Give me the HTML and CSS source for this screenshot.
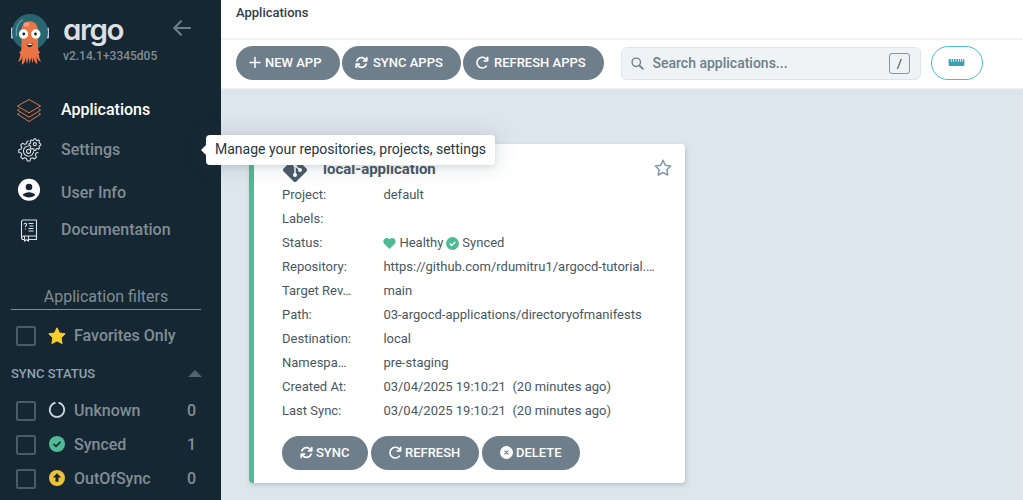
FILE: index.html
```
<!DOCTYPE html>
<html lang="en">
<head>
<meta charset="utf-8">
<title>Applications</title>
<link rel="stylesheet" href="styles.css">
</head>
<body>
<svg width="0" height="0" class="defs">
  <symbol id="sync" viewBox="0 0 512 512"><path fill="currentColor" d="M105 203c22-62 81-107 151-107 44 0 84 18 113 47l17 17h-50c-18 0-32 14-32 32s14 32 32 32h128c18 0 32-14 32-32V64c0-18-14-32-32-32s-32 14-32 32v51l-18-17C374 58 318 32 256 32 158 32 76 94 45 181c-6 17 3 35 20 41s34-2 40-19zM39 289c-9 3-16 9-20 18-2 4-3 9-3 13v128c0 18 14 32 32 32s32-14 32-32v-51l18 17c40 41 96 66 158 66 97 0 180-62 211-149 6-17-3-35-19-41-17-6-35 3-41 20-22 62-81 106-151 106-44 0-84-18-113-47l-17-17h50c18 0 32-14 32-32s-14-32-32-32H48c-3 0-6 0-9 1z"/></symbol>
  <symbol id="redo" viewBox="0 0 512 512"><path fill="none" stroke="currentColor" stroke-width="62" stroke-linecap="round" stroke-linejoin="round" d="M460 55v140H320M445 185A210 210 0 1 0 405 400"/></symbol>
  <symbol id="check" viewBox="0 0 16 16"><circle cx="8" cy="8" r="8" fill="#4fba94"/><path d="M5 8.400l2 2 4-4" fill="none" stroke="currentColor" stroke-width="1.600" stroke-linecap="round" stroke-linejoin="round"/></symbol>
</svg>
<div class="layout">
  <aside class="sidebar">
    <header class="brand">
      <svg class="mascot" viewBox="0 0 40 52">
        <rect x="1" y="14.500" width="3" height="11" rx="1" fill="#b6cde3"/><rect x="36" y="14.500" width="3" height="11" rx="1" fill="#b6cde3"/>
        <circle cx="20" cy="19" r="18" fill="#315f75"/><circle cx="20" cy="19" r="16.500" fill="#2a6670"/>
        <path d="M6.500 23C5.500 15 8 9.500 13 6.500" fill="none" stroke="#6c9daa" stroke-width="1.200"/>
        <path d="M11.500 17.500c0-12.500 16.500-12.500 16.500 0V34c0 4 1.500 5 2.500 5.700l-1.800.6c.3 3.500 1 6.500 2.500 8.400-3-.8-4.200-3-4.800-6l1 8.300c-2.500-.8-3.500-4-3.900-7l-.8 6.800-1.500-6.500-1.500 7-1-7-1.700 7-1.500-7c0 3-1 6.500-3.800 7.300l.9-8.600c-.7 3-2 5-4.700 6 1.500-2.500 2.300-5 2.500-8.400L9 39.700c1-.7 2.500-1.700 2.500-5.700z" fill="#ea7445"/>
        <ellipse cx="16.500" cy="11.500" rx="3" ry="2.200" fill="#f29c7a"/>
        <circle cx="13.500" cy="21" r="4.700" fill="#fff"/><circle cx="25.800" cy="21" r="4.700" fill="#fff"/><circle cx="13.800" cy="21" r="1.400" fill="#17202a"/><circle cx="25.500" cy="21" r="1.400" fill="#17202a"/>
        <path d="M16.800 30.500c2 1 3.800 1 5.800 0 0 4.800-5.800 4.800-5.800 0z" fill="#2b1516"/><path d="M17.500 31h4.300v1h-4.300z" fill="#fff"/>
      </svg>
      <div class="brand-text"><div class="wordmark">argo</div><div class="version">v2.14.1+3345d05</div></div>
      <svg class="back" viewBox="0 0 18 16"><path d="M17 8H1.500M8 1.200L1.300 8 8 14.800" fill="none" stroke="#6c7d89" stroke-width="2.100" stroke-linecap="round" stroke-linejoin="round"/></svg>
    </header>
    <nav class="nav">
      <a class="nav-item active"><svg viewBox="0 0 26 26"><g fill="none" stroke="#dc7645" stroke-width="1" stroke-linejoin="round"><path d="M13 2.500l11.500 6.500L13 15.800 1.500 9z"/><path d="M3.500 12l-2 1.200L13 20.300l11.500-7.100-2-1.200M3.500 16l-2 1.200L13 24.500l11.500-7.300-2-1.200"/></g></svg><span>Applications</span></a>
      <a class="nav-item"><svg viewBox="-1.500 -1 29 29"><g fill="none" stroke="#dce2e6" stroke-width="1.200" stroke-linejoin="round"><path d="M12.500 3.500l-1.500.2-.8 2.700-2 .8-2.300-1.300-2.200 2.200 1.300 2.300-.8 1.900-2.600.8v3.100l2.600.7.8 2.100-1.300 2.300 2.200 2.200 2.300-1.300 2 .8.800 2.700h3.100l.7-2.700 2.100-.8 2.300 1.300 2.200-2.200-1.300-2.300.8-2.100 2.600-.7"/><path d="M12.500 9a5.700 5.700 0 1 0 5.700 6"/><circle cx="12.500" cy="15" r="2.300"/><circle cx="19.500" cy="7" r="1.700"/><path d="M18.700 1h1.700l.6 1.500 1.100.5 1.500-.7 1.200 1.200-.7 1.500.5 1.100 1.500.6v1.500l-1.500.6-.5 1.100.7 1.500-1.200 1.200-1.500-.7-1.100.5-.6 1.500h-1.700l-.6-1.500-1.100-.5-1.500.7-1.200-1.200.7-1.500-.5-1.100-1.500-.6V6.700l1.500-.6.5-1.100-.7-1.500 1.200-1.200 1.500.7 1.100-.5z"/></g></svg><span>Settings</span></a>
      <a class="nav-item user"><svg viewBox="0 0 26 26"><circle cx="13" cy="12.800" r="11" fill="#fff"/><circle cx="13" cy="10" r="3.300" fill="#152733"/><path d="M6.700 18c2.500-3.800 10.100-3.800 12.600 0-3 3.300-9.600 3.300-12.600 0z" fill="#152733"/></svg><span>User Info</span></a>
      <a class="nav-item"><svg viewBox="0 0 26 26"><g fill="none" stroke="#dce2e6" stroke-width="1.100"><path d="M8.500 22.500H7.500Q5.500 22.500 5.500 20.500V5Q5.500 3 7.500 3H20.500V19H8Q5.500 19 5.500 20.800M12.500 22.500H20.500V19M8.500 19.500V24l2-1.300 2 1.300V19.500"/><path d="M12.500 6.500h5M13.500 9h4M12.500 11.500h5M12.500 14h5"/><path d="M8 7.600c0-1.900 2.700-1.700 2.700 0 0 1.200-1.300 1-1.300 2.500M9.400 11.500v1"/></g></svg><span>Documentation</span></a>
    </nav>
    <section class="filters">
      <div class="filter-title">Application filters</div>
      <div class="filter favorites"><i class="box"></i><svg viewBox="0 0 18 18"><path d="M9 .8l2.500 5.200 5.700.8-4.100 4 1 5.800L9 13.900l-5.100 2.700 1-5.800-4.100-4L6.500 6z" fill="#fbce2d" stroke="#fbce2d" stroke-linejoin="round"/></svg><span>Favorites Only</span></div>
      <div class="group">SYNC STATUS<i class="caret"></i></div>
      <div class="filter"><i class="box"></i><svg viewBox="0 0 18 18"><path d="M6.800 1.900a7.200 7.200 0 1 0 4.400 0" fill="none" stroke="#ccd6dd" stroke-width="1.800" stroke-linecap="round"/></svg><span>Unknown</span><b>0</b></div>
      <div class="filter"><i class="box"></i><svg class="dark-check"><use href="#check" x="1" y="1" width="16" height="16"/></svg><span>Synced</span><b>1</b></div>
      <div class="filter"><i class="box"></i><svg viewBox="0 0 18 18"><circle cx="9" cy="9" r="8" fill="#efc03b"/><path d="M9 4.200l4.200 4.400h-2.700v4.200h-3V8.600H4.800z" fill="#152733"/></svg><span>OutOfSync</span><b>0</b></div>
    </section>
  </aside>
  <main class="main">
    <div class="topbar">Applications</div>
    <div class="toolbar">
      <button class="btn new"><svg viewBox="0 0 12 12"><path d="M6 1v10M1 6h10" stroke="currentColor" stroke-width="1.500" stroke-linecap="round"/></svg>NEW APP</button>
      <button class="btn sync-apps"><svg><use href="#sync"/></svg>SYNC APPS</button>
      <button class="btn refresh-apps"><svg><use href="#redo"/></svg>REFRESH APPS</button>
      <div class="search"><svg viewBox="0 0 14 14"><circle cx="5.700" cy="5.700" r="4.500" fill="none" stroke="#6d7f8b" stroke-width="1.500"/><path d="M9.200 9.200l3.600 3.600" stroke="#6d7f8b" stroke-width="1.800" stroke-linecap="round"/></svg><span>Search applications...</span><kbd>/</kbd></div>
      <button class="ruler"><svg viewBox="0 0 18 8"><path d="M1 0h1.500v3h1V0H5v3h1V0h1.800v3h1V0h1.800v3h1V0H13v3h1V0h1.500v3h1V0Q18 0 18 1v5.500Q18 8 16.500 8h-15Q0 8 0 6.500V1Q0 0 1 0z" fill="#3b9fb6"/></svg></button>
    </div>
    <div class="content">
      <article class="card">
        <header class="card-head"><svg class="git" viewBox="0 0 26 26"><path d="M11.600 1.600Q13 .3 14.400 1.600L24.400 11.600Q25.700 13 24.400 14.400L14.400 24.400Q13 25.700 11.600 24.400L1.600 14.400Q.3 13 1.600 11.600z" fill="#4d5b69"/><path d="M9 4l4 4v10M13 8.500l5 4.500" fill="none" stroke="#fff" stroke-width="1.500"/><circle cx="13" cy="8" r="2" fill="#fff"/><circle cx="13" cy="18" r="2" fill="#fff"/><circle cx="18" cy="13" r="2" fill="#fff"/></svg><h2>local-application</h2><svg class="star" viewBox="0 0 18 18"><path d="M9 1.300l2.300 4.900 5.400.7-3.900 3.800 1 5.400L9 13.500l-4.800 2.600 1-5.400L1.300 6.900l5.400-.7z" fill="none" stroke="#8197a7" stroke-width="1.500" stroke-linejoin="round"/></svg></header>
        <dl>
          <dt>Project:</dt><dd>default</dd>
          <dt>Labels:</dt><dd></dd>
          <dt>Status:</dt><dd class="status"><svg viewBox="0 0 14 14"><path d="M7 13L1.300 7.300C-1.800 3.500 3.500-1.500 7 2.300c3.500-3.800 8.800 1.200 5.700 5z" fill="#4fba94"/></svg><span>Healthy</span><svg><use href="#check"/></svg><span>Synced</span></dd>
          <dt>Repository:</dt><dd>https://github.com/rdumitru1/argocd-tutorial.…</dd>
          <dt>Target Rev…</dt><dd>main</dd>
          <dt>Path:</dt><dd>03-argocd-applications/directoryofmanifests</dd>
          <dt>Destination:</dt><dd>local</dd>
          <dt>Namespa…</dt><dd>pre-staging</dd>
          <dt>Created At:</dt><dd>03/04/2025 19:10:21 &nbsp;(20 minutes ago)</dd>
          <dt>Last Sync:</dt><dd>03/04/2025 19:10:21 &nbsp;(20 minutes ago)</dd>
        </dl>
        <footer class="actions">
          <button class="btn sync"><svg><use href="#sync"/></svg>SYNC</button>
          <button class="btn refresh"><svg><use href="#redo"/></svg>REFRESH</button>
          <button class="btn delete"><svg viewBox="0 0 14 14"><circle cx="7" cy="7" r="7" fill="#fff"/><path d="M5.300 5.300l3.400 3.400M8.700 5.300L5.300 8.700" stroke="#6d7f8b" stroke-width="1.300" stroke-linecap="round"/></svg>DELETE</button>
        </footer>
      </article>
    </div>
  </main>
</div>
<div class="tooltip">Manage your repositories, projects, settings</div>
</body>
</html>
```
FILE: styles.css
```
* { box-sizing: border-box; }
body { margin: 0; font: 13px Roboto, sans-serif; color: #495763; }
.defs { position: absolute; }
svg { flex: none; }
.layout { display: flex; height: 500px; }
.sidebar { width: 221px; background: #152733; color: #818d94; flex: none; }
.brand { height: 90px; display: flex; padding-left: 10px; }
.mascot { width: 40px; height: 52px; margin-top: 13px; }
.brand-text { margin-left: 13px; width: 109px; padding-top: 12px; }
.wordmark { font: 600 29.5px/34px Inter, sans-serif; font-feature-settings: "cv11"; color: #dedfe0; letter-spacing: -1.5px; }
.version { font-size: 12px; line-height: 16px; margin-top: 2px; font-weight: 500; white-space: nowrap; }
.back { width: 18px; height: 16px; margin: 20px 0 0 1px; }
.nav-item { height: 40px; display: flex; align-items: center; padding-left: 16px; font-size: 16px; font-weight: 500; }
.nav-item svg { width: 26px; height: 26px; margin-right: 19px; }
.nav-item span { padding-bottom: 2px; }
.nav-item.active { color: #fff; }
.nav-item.user span { padding: 4px 0 0; }
.filters { padding: 35px 0 0 11px; width: 201px; }
.filter-title { height: 25px; line-height: 24px; text-align: center; font-size: 16px; border-bottom: 1px solid #818d94; }
.filter { height: 34px; display: flex; align-items: center; padding-left: 5px; font-size: 16px; font-weight: 500; }
.filter.favorites { height: 52px; }
.box { width: 20px; height: 20px; border: 2px solid #4b5b67; border-radius: 2px; }
.filter svg { width: 18px; height: 18px; margin: 0 8.5px 2px 11.5px; }
.filter.favorites svg { margin-bottom: 1px; }
.filter span, .filter b { padding-bottom: 1px; }
.filter b { margin-left: auto; padding-right: 5px; font-weight: 500; }
.dark-check { color: #152733; }
.group { display: flex; justify-content: space-between; align-items: center; height: 23px; margin-bottom: 9px; color: #8fa4b1; font-size: 13px; font-weight: 500; }
.caret { border: 7px solid transparent; border-top: 0; border-bottom: 7px solid #56636e; margin-right: -1px; }
.main { flex: 1; background: #dee6ed; }
.topbar { height: 40px; background: #fff; border-bottom: 2px solid #edf2f5; padding: 5px 15px; line-height: 16px; font-weight: 500; color: #363c4a; }
.toolbar { height: 49px; background: #fff; border-bottom: 1px solid #edf0f2; padding: 6px 15px; display: flex; gap: 2px; }
.btn { height: 34px; border: 0; border-radius: 17px; background: #6f7e8b; color: #fff; display: flex; align-items: center; font: 500 13px Roboto, sans-serif; white-space: nowrap; padding: 0 0 1px 13px; }
.btn svg { width: 13px; height: 13px; margin-right: 4px; }
.new { width: 104px; }
.new svg { width: 12px; }
.sync-apps { width: 119px; }
.sync-apps svg, .refresh-apps svg { margin-right: 5px; }
.refresh-apps { width: 141px; }
.search { margin: 1px 8px 0 15px; width: 300px; height: 33px; border: 1px solid #dee6ed; border-radius: 6px; background: #eff3f6; display: flex; align-items: center; padding: 0 10px 0 9px; font-size: 14px; font-weight: 500; color: #6d7f8b; }
.search svg { width: 13px; height: 13px; margin-right: 8.5px; }
.search span { padding-bottom: 1px; }
.search kbd { margin-left: auto; width: 21px; height: 21px; border: 1px solid #8197a5; border-radius: 3px; font: 13px/19px Roboto, sans-serif; text-align: center; color: #363c4a; }
.ruler { width: 52px; height: 34px; border: 1px solid #4bb9d2; border-radius: 17px; background: #fff; padding: 0 1px 7px 0; display: flex; align-items: center; justify-content: center; }
.ruler svg { width: 17px; height: 7px; margin-top: 6px; }
.content { padding: 55px 28px 0; }
.card { width: 436px; height: 339px; background: #fff; border-left: 5px solid #4fba94; border-radius: 4px; box-shadow: 1px 2px 4px rgba(80,95,105,.25); padding: 13px 13.5px 0 28px; }
.card-head { display: flex; align-items: center; height: 26px; }
.git { width: 26px; height: 26px; }
h2 { margin: 0 auto 0 15px; font-size: 15px; line-height: 20px; padding-bottom: 2px; }
.star { width: 18px; height: 18px; margin-bottom: 4px; }
dl { margin: 0; display: grid; grid-template-columns: 76px 273px; column-gap: 25.4px; grid-auto-rows: 24px; line-height: 24px; }
dt, dd { margin: 0; white-space: nowrap; }
.status { display: flex; align-items: center; color: #fff; }
.status svg { width: 13px; height: 13px; margin-right: 3px; }
.status span { color: #495763; margin-right: 3px; }
.actions { display: flex; gap: 3px; margin-top: 13px; }
.actions .btn { padding-left: 18px; }
.actions svg { margin-right: 3px; }
.sync { width: 86px; }
.refresh { width: 108px; }
.delete { width: 98px; }
.tooltip { position: absolute; left: 206px; top: 135px; width: 289px; height: 30px; border-radius: 4px; background: #fff; color: #263642; font-size: 14px; line-height: 29px; padding-left: 9px; white-space: nowrap; box-shadow: 0 0 20px 3px rgba(60,75,90,.14), 0 2px 5px rgba(60,75,90,.12); }
.tooltip::before { content: ""; position: absolute; left: -5px; top: 10px; border: 5px solid transparent; border-left: 0; border-right-color: #fff; }
```
